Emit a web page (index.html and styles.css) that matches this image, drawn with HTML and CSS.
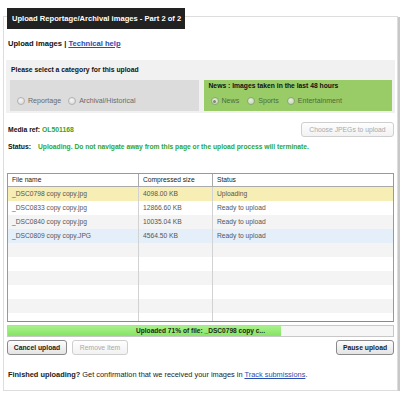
FILE: index.html
```html
<!DOCTYPE html>
<html>
<head>
<meta charset="utf-8">
<link rel="stylesheet" href="styles.css">
</head>
<body>
<div class="panel">
  <div class="tab">Upload Reportage/Archival images - Part 2 of 2</div>
  <div class="links"><b>Upload images</b> | <a href="#">Technical help</a></div>

  <div class="category">
    <div class="cat-title">Please select a category for this upload</div>
    <div class="cat-boxes">
      <div class="box box-gray">
        <div class="radios">
          <span class="radio"><i class="dot"></i>Reportage</span>
          <span class="radio"><i class="dot"></i>Archival/Historical</span>
        </div>
      </div>
      <div class="box box-green">
        <div class="box-title">News : Images taken in the last 48 hours</div>
        <div class="radios">
          <span class="radio"><i class="dot checked"></i>News</span>
          <span class="radio"><i class="dot"></i>Sports</span>
          <span class="radio"><i class="dot"></i>Entertainment</span>
        </div>
      </div>
    </div>
  </div>

  <div class="media-row">
    <div class="media-ref"><b>Media ref:</b> <span class="green">OL501168</span></div>
    <button class="btn btn-disabled btn-choose">Choose JPEGs to upload</button>
  </div>

  <div class="status-row">
    <b class="status-label">Status:</b>
    <span class="status-text">Uploading. Do not navigate away from this page or the upload process will terminate.</span>
  </div>

  <div class="table">
    <div class="thead">
      <div class="th">File name</div>
      <div class="th">Compressed size</div>
      <div class="th">Status</div>
    </div>
    <div class="tbody">
      <div class="tr row-active"><div class="td">_DSC0798 copy copy.jpg</div><div class="td">4098.00 KB</div><div class="td">Uploading</div></div>
      <div class="tr"><div class="td">_DSC0833 copy copy.jpg</div><div class="td">12866.60 KB</div><div class="td">Ready to upload</div></div>
      <div class="tr row-alt"><div class="td">_DSC0840 copy copy.jpg</div><div class="td">10035.04 KB</div><div class="td">Ready to upload</div></div>
      <div class="tr row-hover"><div class="td">_DSC0809 copy copy.JPG</div><div class="td">4564.50 KB</div><div class="td">Ready to upload</div></div>
      <div class="tr row-alt"><div class="td"></div><div class="td"></div><div class="td"></div></div>
      <div class="tr"><div class="td"></div><div class="td"></div><div class="td"></div></div>
      <div class="tr row-alt"><div class="td"></div><div class="td"></div><div class="td"></div></div>
      <div class="tr"><div class="td"></div><div class="td"></div><div class="td"></div></div>
      <div class="tr row-alt"><div class="td"></div><div class="td"></div><div class="td"></div></div>
      <div class="tr"><div class="td"></div><div class="td"></div><div class="td"></div></div>
    </div>
  </div>

  <div class="progress">
    <div class="progress-fill" style="width:71%"></div>
    <div class="progress-text">Uploaded 71% of file: _DSC0798 copy c...</div>
  </div>

  <div class="buttons">
    <div class="btn-group">
      <button class="btn btn-cancel">Cancel upload</button>
      <button class="btn btn-disabled btn-remove">Remove Item</button>
    </div>
    <button class="btn btn-pause">Pause upload</button>
  </div>

  <div class="footer"><b>Finished uploading?</b> Get confirmation that we received your images in <a href="#">Track submissions</a>.</div>
</div>
</body>
</html>
```

FILE: styles.css
```css
* { box-sizing: border-box; }
body {
  margin: 0;
  background: #fff;
  font-family: "Liberation Sans", Arial, sans-serif;
  color: #111;
}
.panel {
  margin: 16px 0 0 3px;
  width: 395px;
  height: 375px;
  border: 1px solid #ddd;
  box-shadow: 2px 1px 0 #c8c8c8;
  padding: 0 3px;
  display: flex;
  flex-direction: column;
}
.tab {
  align-self: flex-start;
  margin-top: -9px;
  height: 21px;
  line-height: 21px;
  padding: 0 4px 0 5px;
  background: #222;
  color: #fff;
  font-weight: bold;
  font-size: 7.6px;
}
.links {
  margin: 10px 0 0 1px;
  height: 10px;
  line-height: 10px;
  font-size: 7.6px;
  font-weight: bold;
  color: #111;
}
a { color: #2a4db0; text-decoration: underline; }
.category {
  margin: 11px -1px 0;
  background: #f1f1f1;
  padding: 5px 3px 2px 4px;
}
.cat-title {
  height: 10px;
  line-height: 10px;
  font-size: 6.8px;
  font-weight: bold;
  padding-left: 1px;
  margin-bottom: 5px;
  color: #111;
}
.cat-boxes { display: flex; gap: 5px; }
.box {
  flex: 1;
  height: 31px;
  display: flex;
  flex-direction: column;
  justify-content: space-between;
  padding: 1px 4px 5px;
}
.box-gray { background: #dcdcdc; justify-content: flex-end; }
.box-green { background: #99cc66; }
.box-title {
  font-size: 6.75px;
  font-weight: bold;
  line-height: 10px;
  height: 10px;
  padding-left: 1px;
  color: #111;
}
.radios {
  display: flex;
  gap: 7px;
  height: 10px;
  align-items: center;
  padding-left: 3px;
  font-size: 7.1px;
  color: #6a6a6a;
}
.box-green .radios { color: #4d6b3d; gap: 8px; }
.radio { display: flex; align-items: center; gap: 3px; }
.dot {
  width: 8px;
  height: 8px;
  border-radius: 50%;
  border: 1px solid #b2b2b2;
  background: radial-gradient(circle at 40% 35%, #f6f6f6, #d4d4d4);
  display: inline-flex;
  align-items: center;
  justify-content: center;
}
.box-green .dot { border-color: #8aa878; background: radial-gradient(circle at 40% 35%, #e6efdd, #bcd3aa); }
.dot.checked::after {
  content: "";
  width: 3px;
  height: 3px;
  border-radius: 50%;
  background: #7a8a70;
}
.media-row {
  margin-top: 9px;
  display: flex;
  justify-content: space-between;
  align-items: center;
  height: 15px;
}
.media-ref { font-size: 6.8px; padding-left: 1px; }
.green { color: #2fa52f; font-weight: bold; }
.btn {
  font-family: inherit;
  height: 15px;
  border-radius: 3px;
  border: 1px solid #8a8a8a;
  background: linear-gradient(#fdfdfd, #e4e4e4);
  font-size: 6.8px;
  font-weight: bold;
  color: #222;
  padding: 0;
  line-height: 13px;
  white-space: nowrap;
}
.btn-disabled {
  border-color: #cfcfcf;
  color: #aaa;
  font-weight: normal;
  background: linear-gradient(#fefefe, #f2f2f2);
}
.btn-choose { width: 93px; }
.status-row {
  margin-top: 5px;
  height: 10px;
  line-height: 10px;
  display: flex;
  font-size: 6.8px;
}
.status-label { width: 31px; padding-left: 1px; }
.status-text { color: #2fa52f; font-weight: bold; font-size: 6.7px; }
.table {
  margin-top: 21px;
  border: 1px solid #999;
  border-bottom-color: #8a8a8a;
  font-size: 6.7px;
}
.thead, .tr {
  display: grid;
  grid-template-columns: 130px 74px 1fr;
}
.thead { height: 13px; border-bottom: 1px solid #aaa; }
.th {
  line-height: 12px;
  padding-left: 4px;
  color: #222;
  border-left: 1px solid #aaa;
}
.th:first-child { border-left: none; }
.tbody { height: 134px; overflow: hidden; }
.tr { height: 14px; }
.td {
  line-height: 14px;
  padding-left: 4px;
  color: #555;
  border-left: 1px solid #d2d2d2;
  white-space: nowrap;
}
.td:first-child { border-left: none; }
.row-active { background: #f6eeb4; }
.row-alt { background: #f4f4f4; }
.row-hover { background: #e5eff9; }
.progress {
  margin-top: 3px;
  height: 12px;
  border: 1px solid #c8c8c8;
  background: #f6f6f6;
  display: grid;
}
.progress-fill {
  grid-area: 1 / 1;
  background: linear-gradient(#a8f08c, #86e463);
}
.progress-text {
  grid-area: 1 / 1;
  text-align: center;
  font-size: 6.6px;
  font-weight: bold;
  line-height: 10px;
  color: #1e2a16;
}
.buttons {
  margin-top: 3px;
  display: flex;
  justify-content: space-between;
}
.btn-group { display: flex; gap: 5px; }
.btn-cancel { width: 60px; }
.btn-remove { width: 56px; }
.btn-pause { width: 58px; }
.footer {
  margin-top: 15px;
  padding-left: 1px;
  font-size: 7.4px;
  line-height: 10px;
  color: #222;
}
```
